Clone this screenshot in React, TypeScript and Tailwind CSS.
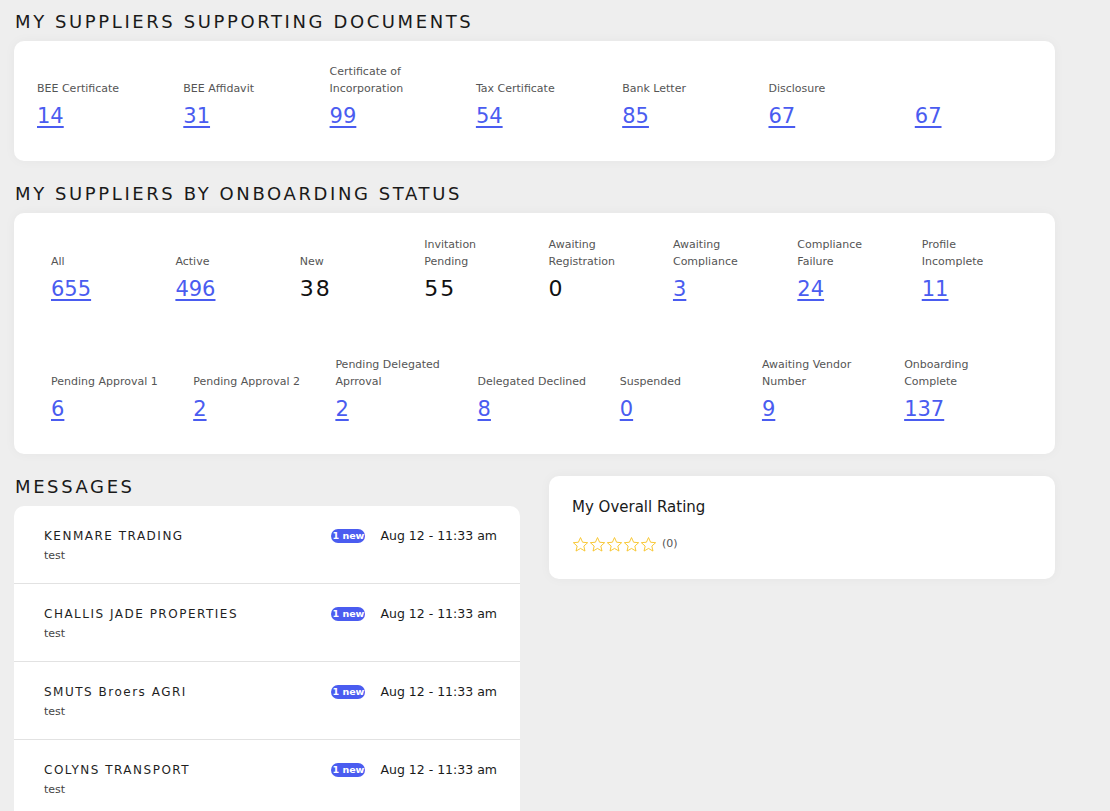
const FONT = "font-['DejaVu_Sans',sans-serif]";

type Stat = { label: string[]; value: string; link?: boolean };

const docs: Stat[] = [
  { label: ['BEE Certificate'], value: '14', link: true },
  { label: ['BEE Affidavit'], value: '31', link: true },
  { label: ['Certificate of', 'Incorporation'], value: '99', link: true },
  { label: ['Tax Certificate'], value: '54', link: true },
  { label: ['Bank Letter'], value: '85', link: true },
  { label: ['Disclosure'], value: '67', link: true },
  { label: [], value: '67', link: true },
];

const statusTop: Stat[] = [
  { label: ['All'], value: '655', link: true },
  { label: ['Active'], value: '496', link: true },
  { label: ['New'], value: '38' },
  { label: ['Invitation', 'Pending'], value: '55' },
  { label: ['Awaiting', 'Registration'], value: '0' },
  { label: ['Awaiting', 'Compliance'], value: '3', link: true },
  { label: ['Compliance', 'Failure'], value: '24', link: true },
  { label: ['Profile', 'Incomplete'], value: '11', link: true },
];

const statusBottom: Stat[] = [
  { label: ['Pending Approval 1'], value: '6', link: true },
  { label: ['Pending Approval 2'], value: '2', link: true },
  { label: ['Pending Delegated', 'Aprroval'], value: '2', link: true },
  { label: ['Delegated Declined'], value: '8', link: true },
  { label: ['Suspended'], value: '0', link: true },
  { label: ['Awaiting Vendor', 'Number'], value: '9', link: true },
  { label: ['Onboarding', 'Complete'], value: '137', link: true },
];

const messages = ['KENMARE TRADING', 'CHALLIS JADE PROPERTIES', 'SMUTS Broers AGRI', 'COLYNS TRANSPORT'];

function Heading({ children }: { children: string }) {
  return (
    <h2 className="text-[18px] leading-[22px] tracking-[2.6px] text-[#1a1a1a] font-normal">{children}</h2>
  );
}

function StatCell({ s }: { s: Stat }) {
  return (
    <div className="flex flex-col justify-end">
      <div className="text-[11px] leading-[17px] text-[#555]">
        {s.label.map((l) => (
          <div key={l}>{l}</div>
        ))}
      </div>
      {s.link ? (
        <a href="#" className="mt-[5px] text-[21px] leading-[28px] text-[#4a5cf0] underline underline-offset-[3px] decoration-[2px] self-start">
          {s.value}
        </a>
      ) : (
        <span className="mt-[5px] text-[22px] leading-[28px] tracking-[2px] text-[#111]">{s.value}</span>
      )}
    </div>
  );
}

function Star() {
  return (
    <svg viewBox="0 0 24 24" className="h-[17px] w-[17px]" fill="none" stroke="#f7c325" strokeWidth="1.3">
      <path d="M12 2.2l2.95 6.6 7.15.65-5.4 4.75 1.6 7.05L12 17.55 5.7 21.25l1.6-7.05-5.4-4.75 7.15-.65z" />
    </svg>
  );
}

export default function App() {
  return (
    <div className={`${FONT} min-h-[811px] w-[1110px] bg-[#eeeeee] pl-[14px] pt-[11px] pb-[20px]`}>
      <div className="w-[1041px]">
        <div className="pl-px">
          <Heading>MY SUPPLIERS SUPPORTING DOCUMENTS</Heading>
        </div>
        <div className="mt-[8px] rounded-[10px] bg-white pl-[23px] pt-[22px] pb-[31px] shadow-[0_0_12px_rgba(0,0,0,0.04)]">
          <div className="grid grid-cols-[repeat(7,146.3px)]">
            {docs.map((s, i) => (
              <StatCell key={i} s={s} />
            ))}
          </div>
        </div>

        <div className="mt-[22px] pl-px">
          <Heading>MY SUPPLIERS BY ONBOARDING STATUS</Heading>
        </div>
        <div className="mt-[8px] rounded-[10px] bg-white pl-[37px] pt-[23px] pb-[31px] shadow-[0_0_12px_rgba(0,0,0,0.04)]">
          <div className="grid grid-cols-[repeat(8,124.4px)]">
            {statusTop.map((s, i) => (
              <StatCell key={i} s={s} />
            ))}
          </div>
          <div className="mt-[53px] grid grid-cols-[repeat(7,142.2px)]">
            {statusBottom.map((s, i) => (
              <StatCell key={i} s={s} />
            ))}
          </div>
        </div>

        <div className="mt-[22px] flex gap-[29px] items-start">
          <div className="w-[506px]">
            <div className="pl-px">
              <Heading>MESSAGES</Heading>
            </div>
            <div className="mt-[8px] rounded-t-[10px] bg-white">
              {messages.map((m) => (
                <div key={m} className="h-[78px] border-b border-[#e2e2e2] pl-[30px] pr-[23px] pt-[22px] flex justify-between">
                  <div>
                    <div className="text-[12px] leading-[16px] tracking-[1.5px] text-[#1f1f1f]">{m}</div>
                    <div className="mt-[4px] text-[11px] leading-[16px] text-[#444]">test</div>
                  </div>
                  <div className="flex items-start h-[16px]">
                    <span className="mt-[1px] flex h-[14px] w-[34px] items-center justify-center rounded-full bg-[#4a5cf0] text-[9.5px] font-bold text-white">
                      1 new
                    </span>
                    <span className="ml-[15px] text-[12.5px] leading-[16px] font-medium text-[#1a1a1a]">
                      Aug 12 - 11:33 am
                    </span>
                  </div>
                </div>
              ))}
            </div>
          </div>
          <div className="w-[506px] rounded-[10px] bg-white pl-[23px] pt-[21px] pb-[26px] shadow-[0_0_12px_rgba(0,0,0,0.04)]">
            <div className="text-[15px] leading-[20px] text-[#1a1a1a]">My Overall Rating</div>
            <div className="mt-[19px] flex items-center">
              <Star />
              <Star />
              <Star />
              <Star />
              <Star />
              <span className="ml-[5px] text-[11px] text-[#555]">(0)</span>
            </div>
          </div>
        </div>
      </div>
    </div>
  );
}
